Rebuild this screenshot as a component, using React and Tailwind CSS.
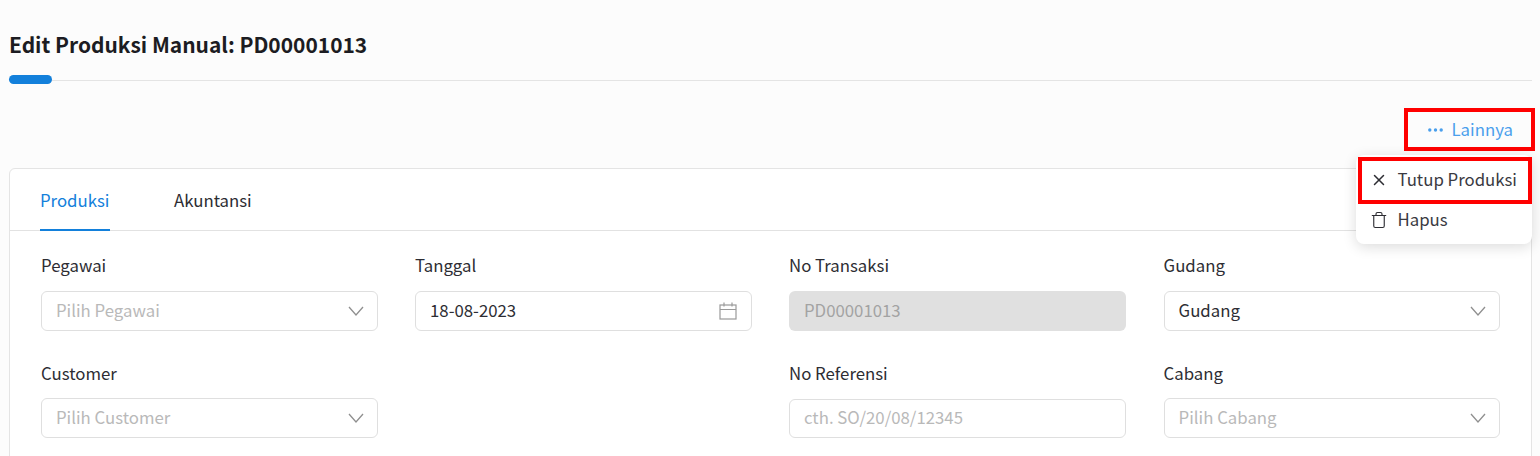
import React from 'react';
import { X, Trash } from 'lucide-react';

const font = "font-['Noto_Sans_CJK_JP','Noto_Sans',sans-serif]";

function Chevron() {
  return (
    <svg width="16" height="10" viewBox="0 0 16 10" fill="none" stroke="#8f8f8f" strokeWidth="1.3" className="shrink-0">
      <path d="M1 1l7 8 7-8" />
    </svg>
  );
}

function Field({ label, className = '', children }) {
  return (
    <div className={`flex flex-col ${className}`}>
      <label className="text-[16.8px] leading-[24px] text-[#2d2d33] mb-[13.5px]">{label}</label>
      {children}
    </div>
  );
}

function Select({ value, placeholder }) {
  return (
    <div className="h-[40px] bg-white border border-[#dfdfdf] rounded-[6px] pl-[14px] pr-[13px] flex items-center justify-between">
      <span className={`text-[16.8px] ${value ? 'text-[#2d2d33]' : 'text-[#b9b9b9]'}`}>{value || placeholder}</span>
      <Chevron />
    </div>
  );
}

export default function App() {
  return (
    <div className={`h-[456px] overflow-hidden bg-[#fcfcfc] relative ${font}`}>
      {/* HEADER */}
      <div className="pl-[9px] pr-[8px] pt-[29px]">
        <h1 className="text-[20.95px] leading-[30px] font-bold text-[#1c1c22]">Edit Produksi Manual: PD00001013</h1>
        <div className="relative h-[1px] bg-[#e4e4e4] mt-[21px]">
          <div className="absolute left-0 top-[-5px] w-[43px] h-[9px] rounded-full bg-[#1380db]" />
        </div>
      </div>

      {/* LAINNYA */}
      <div className="flex justify-end pr-[5px] mt-[27px]">
        <button className="w-[131px] h-[43px] border-[4px] border-[#ff0000] flex items-center pl-[20px] gap-[8.5px] text-[16.8px] text-[#4a9fec]">
          <svg width="15" height="4" viewBox="0 0 15 4" fill="#4a9fec">
            <circle cx="1.8" cy="2" r="1.7" />
            <circle cx="7.5" cy="2" r="1.7" />
            <circle cx="13.2" cy="2" r="1.7" />
          </svg>
          <span>Lainnya</span>
        </button>
      </div>

      {/* CARD */}
      <div className="ml-[9px] mr-[8px] mt-[17px] h-[320px] bg-white border border-[#e4e4e4] rounded-[6px]">
        <div className="h-[62px] border-b border-[#e2e2e2] flex pl-[30px] gap-[64px]">
          <div className="relative w-[70px] flex items-center text-[16.8px] text-[#1380db] pt-[2px]">
            Produksi
            <div className="absolute left-0 right-0 bottom-[-1px] h-[2px] bg-[#1380db]" />
          </div>
          <div className="flex items-center text-[16.8px] text-[#2d2d33] pt-[2px]">Akuntansi</div>
        </div>

        <div className="grid grid-cols-[repeat(4,337px)] gap-x-[37px] gap-y-[30px] pl-[31px] pt-[22px]">
          <Field label="Pegawai"><Select placeholder="Pilih Pegawai" /></Field>
          <Field label="Tanggal">
            <div className="h-[40px] bg-white border border-[#dfdfdf] rounded-[6px] pl-[14px] pr-[14px] flex items-center justify-between">
              <span className="text-[16.8px] text-[#2d2d33]">18-08-2023</span>
              <svg width="18" height="18" viewBox="0 0 18 18" fill="none" stroke="#9a9a9a" strokeWidth="1.2">
                <rect x="1" y="3" width="16" height="14" />
                <path d="M1 7.5h16M5 0.5v4M13 0.5v4" />
              </svg>
            </div>
          </Field>
          <Field label="No Transaksi">
            <div className="h-[40px] bg-[#e0e0e0] rounded-[6px] pl-[15px] flex items-center text-[16.8px] text-[#a3a3a3]">PD00001013</div>
          </Field>
          <Field label="Gudang" className="ml-[0.6px]"><Select value="Gudang" /></Field>

          <Field label="Customer"><Select placeholder="Pilih Customer" /></Field>
          <div />
          <Field label="No Referensi">
            <div className="h-[39px] mt-[0.5px] bg-white border border-[#dfdfdf] rounded-[6px] pl-[14px] flex items-center text-[16.8px] text-[#b9b9b9]">cth. SO/20/08/12345</div>
          </Field>
          <Field label="Cabang" className="ml-[0.6px]"><Select placeholder="Pilih Cabang" /></Field>
        </div>
      </div>

      {/* DROPDOWN */}
      <div className="absolute left-[1356px] top-[155px] w-[176px] h-[89px] bg-white rounded-[8px] shadow-[0_3px_14px_rgba(0,0,0,0.14)]">
        <div className="absolute top-[2px] left-[2px] right-0 h-[47px] border-[4px] border-[#ff0000] flex items-center pl-[8px] pb-[2px] gap-[9.5px] text-[16.8px] text-[#3a3a42]">
          <X size={18} strokeWidth={2} className="text-[#2d2d33]" />
          <span>Tutup Produksi</span>
        </div>
        <div className="absolute left-[14px] top-[52px] h-[26px] flex items-center gap-[9.5px] text-[16.8px] text-[#3a3a42]">
          <Trash size={18} strokeWidth={1.5} className="text-[#2d2d33]" />
          <span>Hapus</span>
        </div>
      </div>
    </div>
  );
}
